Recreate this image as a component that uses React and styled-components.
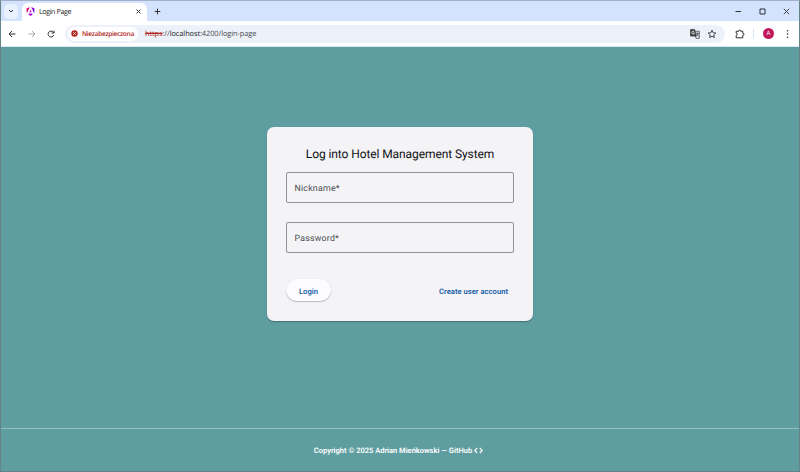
import React from "react";
import styled, { createGlobalStyle } from "styled-components";

const GlobalStyle = createGlobalStyle`
  * { box-sizing: border-box; }
  body {
    margin: 0;
    overflow: hidden;
    font-family: Roboto, sans-serif;
    text-rendering: geometricPrecision;
  }
`;

const Window = styled.div`
  width: 800px;
  height: 472px;
  display: flex;
  flex-direction: column;
  border: 1px solid #638387;
  border-top-color: #a3afc4;
  background: #5f9ea0;
  overflow: hidden;
`;

const TabStrip = styled.div`
  height: 20px;
  flex: none;
  display: flex;
  align-items: center;
  background: #d3e3fd;
  padding-left: 3px;
  font-family: "Open Sans", sans-serif;
`;

const TabSearch = styled.div`
  width: 14px;
  height: 15px;
  border-radius: 5px;
  background: #e9f1fe;
  display: grid;
  place-items: center;
`;

const Tab = styled.div`
  width: 125px;
  height: 18px;
  align-self: flex-end;
  margin-left: 4px;
  padding: 0 6px 2px 4px;
  border-radius: 6px 6px 0 0;
  background: #fff;
  display: flex;
  align-items: center;
`;

const TabTitle = styled.span`
  flex: 1;
  margin-left: 4px;
  padding-top: 2px;
  font-size: 7.2px;
  line-height: 10px;
  letter-spacing: -0.42px;
  color: #202124;
`;

const Icon = styled.svg`
  display: block;
  flex: none;
  width: ${(p) => p.$w || 10}px;
  height: ${(p) => p.$h || p.$w || 10}px;
  margin-left: ${(p) => p.$ml || 0}px;
  fill: none;
  stroke: ${(p) => p.$color || "#303134"};
  stroke-width: ${(p) => p.$sw || 1};
`;

const WindowControls = styled.div`
  display: flex;
  align-items: center;
  margin-left: auto;
  padding-right: 9px;
  gap: 17px;
`;

const Toolbar = styled.div`
  height: 26px;
  flex: none;
  display: flex;
  align-items: center;
  background: #fff;
  border-bottom: 1px solid #dbe5ef;
  padding-left: 6px;
`;

const AddressBar = styled.div`
  width: 660px;
  height: 18px;
  margin-left: 9px;
  padding: 0 8px 0 3px;
  border-radius: 9px;
  background: #edf1fa;
  display: flex;
  align-items: center;
  font-family: "Open Sans", sans-serif;
`;

const SecurityChip = styled.div`
  width: 70px;
  height: 14px;
  border-radius: 7px;
  background: #fff;
  padding-left: 3px;
  display: flex;
  align-items: center;
  gap: 4px;
  color: #b3261e;
  font-size: 6.6px;
  font-weight: 600;
  letter-spacing: -0.32px;
  white-space: nowrap;
`;

const Url = styled.div`
  flex: 1;
  margin-left: 7px;
  padding-top: 1px;
  font-size: 7.4px;
  letter-spacing: -0.07px;
  color: #47494d;
  white-space: nowrap;
`;

const Scheme = styled.span`
  color: #b3261e;
  text-decoration: line-through;
`;

const Host = styled.span`
  color: #202124;
`;

const Divider = styled.div`
  width: 1px;
  height: 9px;
  margin-left: 8px;
  background: #d3e3fd;
`;

const Avatar = styled.div`
  width: 11px;
  height: 11px;
  margin-left: 9px;
  border-radius: 50%;
  background: #c2185b;
  color: #fff;
  font-size: 6px;
  line-height: 11px;
  text-align: center;
`;

const Page = styled.main`
  flex: 1;
  display: flex;
  flex-direction: column;
  align-items: center;
  padding-top: 80px;
`;

const Card = styled.form`
  width: 266px;
  height: 194px;
  padding: 19px;
  border-radius: 7px;
  background: #f4f3f6;
  box-shadow: 0 1px 1px rgba(0, 0, 0, 0.2), 0 1px 2px rgba(0, 0, 0, 0.1);
`;

const Heading = styled.h1`
  margin: 0;
  height: 26px;
  font-size: 12px;
  font-weight: 400;
  line-height: 16px;
  letter-spacing: -0.09px;
  text-align: center;
  white-space: nowrap;
  color: #111215;
`;

const Field = styled.div`
  height: 31px;
  margin-bottom: 19px;
  padding: 3px 7.5px 0;
  border: 1px solid #929399;
  border-radius: 2px;
  display: flex;
  align-items: center;
  font-size: 8.8px;
  letter-spacing: 0.22px;
  color: #4c4e54;
`;

const Actions = styled.div`
  display: flex;
  align-items: center;
  justify-content: space-between;
  margin-top: 26px;
`;

const Action = styled.button`
  height: 22px;
  padding: 2px ${(p) => (p.$raised ? 0 : 6)}px 0;
  width: ${(p) => (p.$raised ? "45px" : "auto")};
  border: 0;
  border-radius: 11px;
  background: ${(p) => (p.$raised ? "#fcfbff" : "transparent")};
  box-shadow: ${(p) => (p.$raised ? "0 1px 1px rgba(0,0,0,.22), 0 0 1px rgba(0,0,0,.15)" : "none")};
  color: #1a62a8;
  font: 600 7.65px Roboto, sans-serif;
  text-rendering: geometricPrecision;
  white-space: nowrap;
`;

const Footer = styled.footer`
  width: 100%;
  height: 43px;
  margin-top: auto;
  padding-right: 3px;
  border-top: 1px solid #94bfc0;
  display: flex;
  align-items: center;
  justify-content: center;
  gap: 2px;
  color: #fff;
  font-size: 7.5px;
  font-weight: 600;
`;

const AngularLogo = () => (
  <Icon $w={9} $h={9} viewBox="0 0 24 24" stroke="none">
    <defs>
      <linearGradient id="angular" x1="0" y1="0" x2="1" y2="0.3">
        <stop offset="0" stopColor="#e40035" />
        <stop offset="0.5" stopColor="#c40bc0" />
        <stop offset="1" stopColor="#6c00f5" />
      </linearGradient>
    </defs>
    <path
      fill="url(#angular)"
      stroke="none"
      d="M14 0l8.7 4-.9 13L14 0zm3.6 20L12 24l-5.6-4 1.1-2.800h9zM12 7.200L15 14H9zM2.200 17L1.300 4 10 0z"
    />
  </Icon>
);

export default function App() {
  return (
    <>
      <GlobalStyle />
      <Window>
        <TabStrip>
          <TabSearch>
            <Icon $w={6} viewBox="0 0 6 6"><path d="M1 2l2 2 2-2" /></Icon>
          </TabSearch>
          <Tab>
            <AngularLogo />
            <TabTitle>Login Page</TabTitle>
            <Icon $w={5} viewBox="0 0 5 5"><path d="M.5.5l4 4m0-4l-4 4" /></Icon>
          </Tab>
          <Icon $w={7} $ml={7} viewBox="0 0 7 7"><path d="M3.500 .7v5.600M.7 3.500h5.600" /></Icon>
          <WindowControls>
            <Icon $w={7} viewBox="0 0 7 7"><path d="M.5 3.500h5.500" /></Icon>
            <Icon $w={7} viewBox="0 0 7 7"><path d="M1 1h5v5H1z" /></Icon>
            <Icon $w={7} $sw={0.9} viewBox="0 0 7 7"><path d="M.8.8l5.400 5.400m0-5.400L.8 6.200" /></Icon>
          </WindowControls>
        </TabStrip>
        <Toolbar>
          <Icon viewBox="0 0 10 10"><path d="M8.500 5H2M5 2L2 5l3 3" /></Icon>
          <Icon $ml={10} $color="#a9abb0" viewBox="0 0 10 10"><path d="M1.500 5H8M5 2l3 3-3 3" /></Icon>
          <Icon $ml={9} viewBox="0 0 10 10">
            <path d="M7.700 6.100A2.900 2.900 0 1 1 7.200 3.100L8 4" />
            <path d="M8 1.600V4H5.600" />
          </Icon>
          <AddressBar>
            <SecurityChip>
              <Icon $w={7} viewBox="0 0 7 7">
                <circle cx="3.500" cy="3.500" r="3.200" fill="#b3261e" stroke="none" />
                <path d="M2.300 2.300l2.400 2.400m0-2.400L2.300 4.700" stroke="#fff" strokeWidth=".8" />
              </Icon>
              Niezabezpieczona
            </SecurityChip>
            <Url><Scheme>https</Scheme>://<Host>localhost</Host>:4200/login-page</Url>
            <Icon viewBox="0 0 10 10" $sw={0.7}>
              <path d="M.5.6h4.200l1.500 6.500H.5z" fill="#44474c" />
              <path d="M5.200 2.300h4.100v7H6l-.7-2.200M6 4.300h2.900M7.400 3.500v.8M6.300 7.300c1-.6 1.700-1.600 2-3M6.700 5.200c.4.900 1 1.600 1.900 2.100" />
              <path d="M4.200 2.700A1.400 1.400 0 1 0 4.500 4H3.200" stroke="#fff" />
            </Icon>
            <Icon $ml={7} $sw={0.9} viewBox="0 0 10 10">
              <path d="M5 1.200l1.150 2.500 2.650.3-2 1.850.55 2.700L5 7.200 2.650 8.550l.55-2.700-2-1.850 2.650-.3z" />
            </Icon>
          </AddressBar>
          <Icon $ml={10} viewBox="0 0 10 10">
            <path d="M1.200 2.200H4V1.800a.8.8 0 0 1 1.600 0v.4h2.200v2.300h.4a.8.8 0 0 1 0 1.600h-.4v2.700H1.200V6.400a1.100 1.100 0 0 0 0-2.200z" />
          </Icon>
          <Divider />
          <Avatar>A</Avatar>
          <Icon $w={3} $h={10} $ml={12} viewBox="0 0 3 10">
            <g fill="#303134" stroke="none">
              <circle cx="1.500" cy="1.800" r=".8" /><circle cx="1.500" cy="5" r=".8" /><circle cx="1.500" cy="8.200" r=".8" />
            </g>
          </Icon>
        </Toolbar>
        <Page>
          <Card>
            <Heading>Log into Hotel Management System</Heading>
            <Field>Nickname*</Field>
            <Field>Password*</Field>
            <Actions>
              <Action type="button" $raised>Login</Action>
              <Action type="button">Create user account</Action>
            </Actions>
          </Card>
          <Footer>
            <span>Copyright © 2025 Adrian Mieńkowski — GitHub</span>
            <Icon $w={9} $h={7} $color="#fff" $sw={1.1} viewBox="0 0 9 7"><path d="M3.200 1L.8 3.500 3.200 6M5.800 1L8.200 3.500 5.800 6" /></Icon>
          </Footer>
        </Page>
      </Window>
    </>
  );
}
